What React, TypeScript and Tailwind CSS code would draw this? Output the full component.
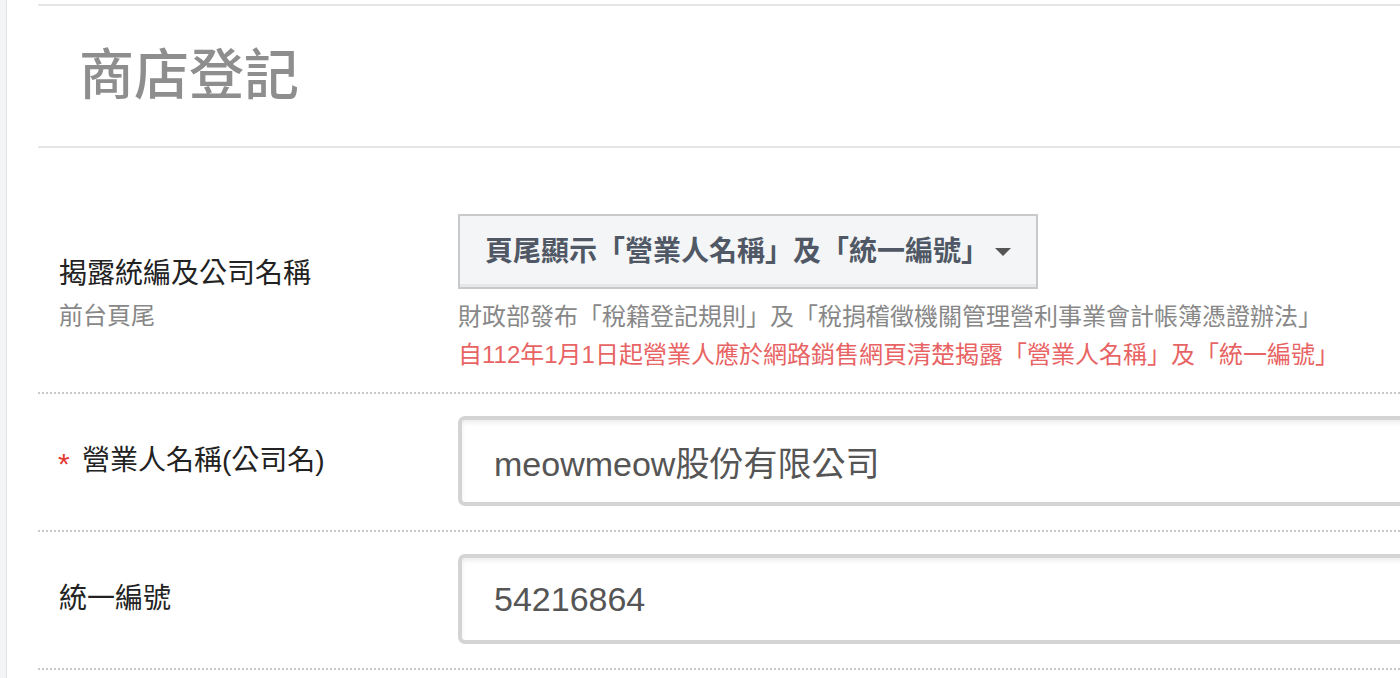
import { useState } from 'react';

const FONT = 'font-["Liberation_Sans","Noto_Sans_CJK_TC",sans-serif]';

function Caret() {
  return (
    <svg width="16" height="8" viewBox="0 0 16 8" className="shrink-0">
      <path d="M0 0 L16 0 L8 8 Z" fill="#555" />
    </svg>
  );
}

export default function App() {
  const [name, setName] = useState('meowmeow股份有限公司');
  const [taxId, setTaxId] = useState('54216864');

  return (
    <div className={`flex min-h-screen bg-white overflow-hidden ${FONT}`}>
      {/* Left rail */}
      <div className="w-[7px] shrink-0 bg-[#f3f4f6] border-r border-[#e3e3e3]" />

      <div className="flex-1 min-w-0 pl-[31px] pt-[4px]">
        {/* Header */}
        <div className="h-[144px] border-y-2 border-[#e6e6e6] flex items-center pl-[41px]">
          <h1 className="text-[55px] leading-none font-medium text-[#8e8e8e] -mt-[1px]">
            商店登記
          </h1>
        </div>

        {/* Row: 揭露統編 */}
        <div className="flex border-b-2 border-dotted border-[#c9c9c9]">
          <div className="w-[420px] shrink-0 pl-[21px] pt-[106px]">
            <div className="text-[28px] leading-[40px] text-[#222]">揭露統編及公司名稱</div>
            <div className="mt-[2px] text-[24px] leading-[40px] text-[#888]">前台頁尾</div>
          </div>
          <div className="flex-1 pt-[66px] pb-[18px]">
            <button className="w-[580px] h-[75px] flex items-center justify-between pl-[25px] pr-[25px] bg-[#f4f5f7] border-2 border-[#c9c9c9] shadow-[inset_0_-3px_0_#e6e7e8]">
              <span className="text-[28px] font-bold text-[#4f5864] leading-none">
                頁尾顯示「營業人名稱」及「統一編號」
              </span>
              <Caret />
            </button>
            <p className="mt-[9px] text-[24px] leading-[38px] text-[#888] whitespace-nowrap">
              財政部發布「稅籍登記規則」及「稅捐稽徵機關管理營利事業會計帳簿憑證辦法」
            </p>
            <p className="text-[24px] leading-[38px] text-[#e86464] whitespace-nowrap">
              自112年1月1日起營業人應於網路銷售網頁清楚揭露「營業人名稱」及「統一編號」
            </p>
          </div>
        </div>

        {/* Row: 營業人名稱 */}
        <div className="flex items-center border-b-2 border-dotted border-[#c9c9c9] pt-[22px] pb-[24px]">
          <label className="w-[420px] shrink-0 pl-[20px] flex items-center text-[28px] leading-[40px] text-[#222]">
            <span className="text-[#e53935] text-[30px] w-[24px] leading-none pt-[6px]">*</span>
            營業人名稱(公司名)
          </label>
          <input
            value={name}
            onChange={(e) => setName(e.target.value)}
            className="w-[1000px] shrink-0 h-[90px] px-[32px] border-4 border-[#d4d4d4] rounded-[7px] shadow-[inset_0_3px_4px_rgba(0,0,0,0.07)] text-[34px] text-[#555] outline-none"
          />
        </div>

        {/* Row: 統一編號 */}
        <div className="flex items-center border-b-2 border-dotted border-[#c9c9c9] pt-[22px] pb-[24px]">
          <label className="w-[420px] shrink-0 pl-[21px] text-[28px] leading-[40px] text-[#222]">
            統一編號
          </label>
          <input
            value={taxId}
            onChange={(e) => setTaxId(e.target.value)}
            className="w-[1000px] shrink-0 h-[90px] px-[32px] border-4 border-[#d4d4d4] rounded-[7px] shadow-[inset_0_3px_4px_rgba(0,0,0,0.07)] text-[34px] text-[#555] outline-none"
          />
        </div>
      </div>
    </div>
  );
}
